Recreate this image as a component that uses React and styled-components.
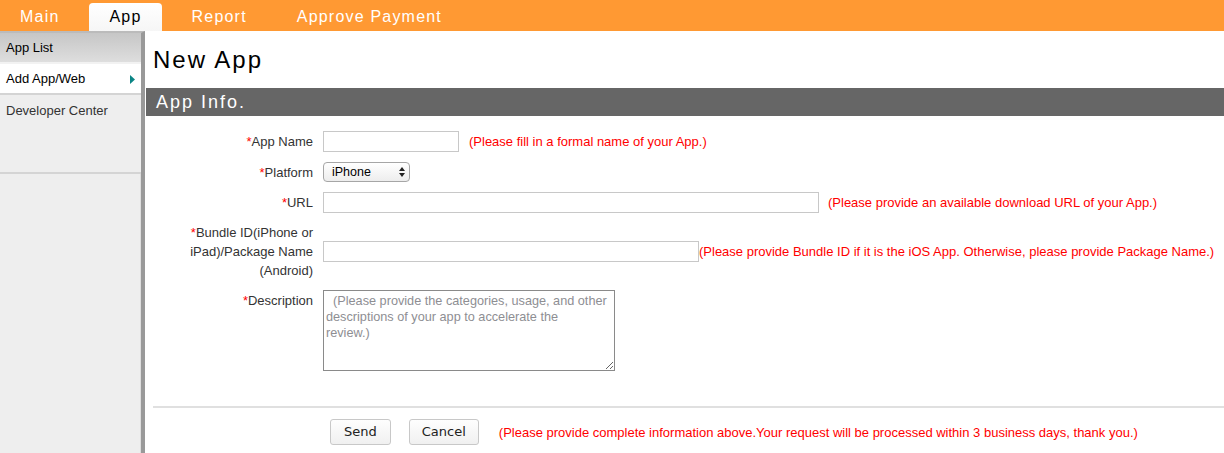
import React from 'react';
import styled, { createGlobalStyle } from 'styled-components';

const GlobalStyle = createGlobalStyle`
    html, body {
        margin: 0;
        padding: 0;
        background: #ffffff;
        font-family: "Liberation Sans", Arial, sans-serif;
    }
`;

const Page = styled.div`
    display: flex;
    flex-direction: column;
    min-height: 100vh;
`;

const TopBar = styled.nav`
    display: flex;
    align-items: flex-end;
    height: 31px;
    background: #ff9933;
`;

const Tab = styled.a`
    display: block;
    height: 28px;
    margin-right: 10px;
    padding: 0 20px;
    box-sizing: border-box;
    font-size: 16px;
    line-height: 27px;
    letter-spacing: 1.2px;
    color: ${props => (props.active ? '#000000' : '#ffffff')};
    background: ${props => (props.active ? 'linear-gradient(#ffffff, #f6f6f6)' : 'transparent')};
    border-radius: 4px 4px 0 0;
    cursor: pointer;
`;

const Body = styled.div`
    display: flex;
    flex: 1;
`;

const Sidebar = styled.aside`
    width: 141px;
    flex-shrink: 0;
    background: #eeeeee;
    border-top: 2px solid #bbbbbb;
    border-right: 4px solid #999999;
    box-shadow: inset -1px 0 0 #dddddd;
`;

const SideItem = styled.div`
    display: flex;
    justify-content: space-between;
    height: ${props => props.tall ? '79px' : '31px'};
    align-items: ${props => props.tall ? 'flex-start' : 'center'};
    padding: ${props => props.tall ? '8px 8px 0 6px' : '0 6px 0 6px'};
    box-sizing: border-box;
    font-size: 13px;
    color: ${props => props.muted ? '#333333' : '#000000'};
    background: ${props => props.variant === 'head'
        ? 'linear-gradient(#c6c6c6, #dedede)'
        : props.variant === 'active' ? '#ffffff' : '#eeeeee'};
    border-bottom: 2px solid ${props => props.variant === 'head' ? '#f2f2f2' : '#d4d4d4'};
`;

const Arrow = styled.svg`
    width: 5px;
    height: 9px;
    margin-top: 1px;
`;

const Main = styled.main`
    flex: 1;
    min-width: 0;
    padding: 2px 0 0 1px;
`;

const PageTitle = styled.h1`
    margin: 0;
    padding: 13px 0 0 7px;
    height: 55px;
    box-sizing: border-box;
    font-size: 24px;
    font-weight: normal;
    letter-spacing: 2px;
    color: #000000;
`;

const SectionHead = styled.h2`
    margin: 0;
    height: 28px;
    padding-left: 10px;
    background: #666666;
    font-size: 18px;
    font-weight: normal;
    line-height: 29px;
    letter-spacing: 2px;
    color: #ffffff;
`;

const Form = styled.div`
    display: grid;
    grid-template-columns: 167px 1fr;
    column-gap: 10px;
    row-gap: 10px;
    align-items: center;
    margin-top: 15px;
`;

const Label = styled.label`
    text-align: right;
    font-size: 13px;
    line-height: 19px;
    color: #333333;
    align-self: ${props => props.top ? 'flex-start' : 'center'};
    padding-top: ${props => props.top ? '1px' : '0'};
`;

const Star = styled.span`
    color: #ff0000;
`;

const Field = styled.div`
    display: flex;
    align-items: center;
`;

const TextInput = styled.input`
    width: ${props => props.w}px;
    height: 21px;
    box-sizing: border-box;
    margin: 0;
    border: 1px solid #c8c8c8;
    padding: 0 4px;
    font-size: 13px;
    outline: none;
`;

const Hint = styled.span`
    margin-left: ${props => props.gap ?? 10}px;
    font-size: 13px;
    color: #ff0000;
    white-space: nowrap;
`;

const SelectWrap = styled.div`
    position: relative;
    width: 87px;
    height: 20px;
`;

const Select = styled.select`
    appearance: none;
    -webkit-appearance: none;
    width: 100%;
    height: 100%;
    margin: 0;
    padding: 0 0 0 8px;
    border: 1px solid #a6a6a6;
    border-radius: 4px;
    background: linear-gradient(#ffffff, #ededed);
    font-family: "Liberation Sans", Arial, sans-serif;
    font-size: 12.5px;
    color: #000000;
`;

const SelectArrows = styled.svg`
    position: absolute;
    right: 5px;
    top: 5px;
    width: 6px;
    height: 10px;
    pointer-events: none;
`;

const TextArea = styled.textarea`
    width: 292px;
    height: 81px;
    box-sizing: border-box;
    margin: 0;
    padding: 2px 2px;
    border: 1px solid #8a8a8a;
    font-family: "Liberation Sans", Arial, sans-serif;
    font-size: 12.7px;
    line-height: 16px;
    color: #000000;

    &::placeholder {
        color: #8e8e93;
    }
`;

const Divider = styled.hr`
    margin: 35px 0 0 7px;
    border: none;
    border-top: 2px solid #e0e0e0;
`;

const Actions = styled.div`
    display: flex;
    align-items: center;
    gap: 18px;
    padding: 11px 0 0 184px;
`;

const Button = styled.button`
    height: 26px;
    padding: 0 ${props => props.pad}px;
    border: 1px solid #c8c8c8;
    border-radius: 3px;
    background: linear-gradient(#fefefe, #f0f0f0);
    font-family: "DejaVu Sans", Verdana, sans-serif;
    font-size: 13px;
    line-height: 22px;
    color: #222222;
`;

const Note = styled.span`
    margin-left: 2px;
    font-size: 13px;
    color: #ff0000;
`;

const descriptionHint =
    '  (Please provide the categories, usage, and other\ndescriptions of your app to accelerate the\nreview.)';

const App = () => (
    <Page>
        <GlobalStyle />
        <TopBar>
            <Tab>Main</Tab>
            <Tab active>App</Tab>
            <Tab>Report</Tab>
            <Tab>Approve Payment</Tab>
        </TopBar>
        <Body>
            <Sidebar>
                <SideItem variant="head">App List</SideItem>
                <SideItem variant="active">
                    Add App/Web
                    <Arrow viewBox="0 0 5 9"><path d="M0 0 L5 4.5 L0 9 Z" fill="#0b8585" /></Arrow>
                </SideItem>
                <SideItem tall muted>Developer Center</SideItem>
            </Sidebar>
            <Main>
                <PageTitle>New App</PageTitle>
                <SectionHead>App Info.</SectionHead>
                <Form>
                    <Label><Star>*</Star>App Name</Label>
                    <Field>
                        <TextInput w={136} />
                        <Hint>(Please fill in a formal name of your App.)</Hint>
                    </Field>

                    <Label><Star>*</Star>Platform</Label>
                    <Field>
                        <SelectWrap>
                            <Select defaultValue="iPhone">
                                <option>iPhone</option>
                                <option>iPad</option>
                                <option>Android</option>
                            </Select>
                            <SelectArrows viewBox="0 0 6 10">
                                <path d="M0 4 L3 0 L6 4 Z M0 6 L3 10 L6 6 Z" fill="#222" />
                            </SelectArrows>
                        </SelectWrap>
                    </Field>

                    <Label><Star>*</Star>URL</Label>
                    <Field>
                        <TextInput w={496} />
                        <Hint gap={9}>(Please provide an available download URL of your App.)</Hint>
                    </Field>

                    <Label><Star>*</Star>Bundle ID(iPhone or iPad)/Package Name (Android)</Label>
                    <Field>
                        <TextInput w={376} />
                        <Hint gap={0}>(Please provide Bundle ID if it is the iOS App. Otherwise, please provide Package Name.)</Hint>
                    </Field>

                    <Label top><Star>*</Star>Description</Label>
                    <Field>
                        <TextArea placeholder={descriptionHint} />
                    </Field>
                </Form>
                <Divider />
                <Actions>
                    <Button pad={13}>Send</Button>
                    <Button pad={12}>Cancel</Button>
                    <Note>(Please provide complete information above.Your request will be processed within 3 business days, thank you.)</Note>
                </Actions>
            </Main>
        </Body>
    </Page>
);

export default App;
